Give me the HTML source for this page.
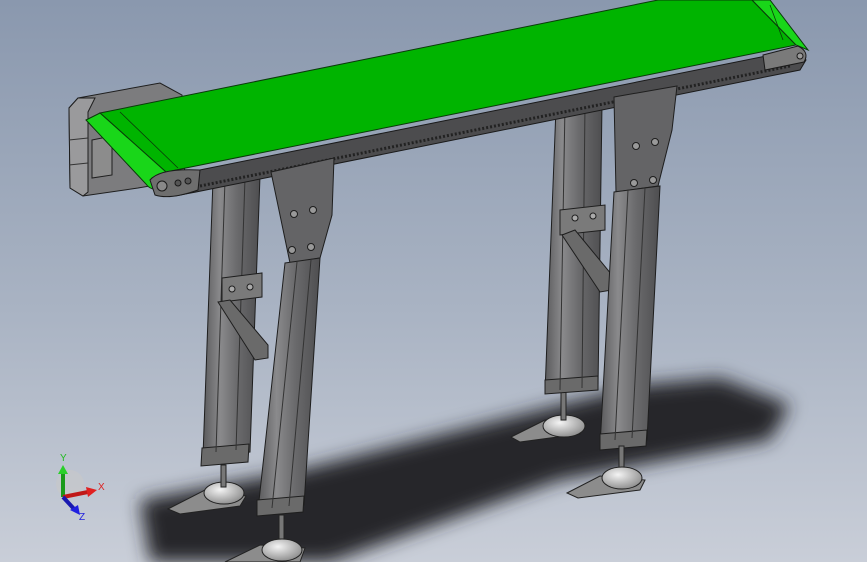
<!DOCTYPE html>
<html><head><meta charset="utf-8"><style>
html,body{margin:0;padding:0;width:867px;height:562px;overflow:hidden}
svg{display:block}
</style></head><body>
<svg width="867" height="562" viewBox="0 0 867 562" xmlns="http://www.w3.org/2000/svg" font-family="Liberation Sans, sans-serif">
<defs>
<linearGradient id="bg" x1="0" y1="0" x2="0" y2="1">
<stop offset="0" stop-color="#8a98ae"/><stop offset="0.55" stop-color="#a9b3c3"/><stop offset="1" stop-color="#c9ced8"/>
</linearGradient>
<filter id="bl" x="-20%" y="-40%" width="140%" height="180%"><feGaussianBlur stdDeviation="9"/></filter>
<linearGradient id="leg" x1="0" y1="0" x2="1" y2="0">
<stop offset="0" stop-color="#5a5a5c"/><stop offset="0.3" stop-color="#8a8a8c"/><stop offset="0.6" stop-color="#6a6a6c"/><stop offset="1" stop-color="#4e4e50"/>
</linearGradient>
<radialGradient id="dome" cx="0.4" cy="0.35" r="0.7"><stop offset="0" stop-color="#f4f4f4"/><stop offset="1" stop-color="#8a8a8a"/></radialGradient>
</defs>
<rect width="867" height="562" fill="url(#bg)"/>
<path d="M140,500 L300,470 L640,385 L720,378 L790,405 L770,440 L560,480 L330,562 L150,562 Z" fill="#26282c" filter="url(#bl)"/>
<g stroke="#222" stroke-width="1">
<path d="M168,509 L205,490 L246,496 L240,506 L180,514 Z" fill="#8c8c8c"/>
<ellipse cx="224" cy="493" rx="20" ry="11" fill="url(#dome)"/>
<rect x="221" y="465" width="5" height="22" fill="#777"/>
<path d="M511,437 L545,420 L586,424 L580,434 L520,442 Z" fill="#8c8c8c"/>
<ellipse cx="564" cy="426" rx="21" ry="11" fill="url(#dome)"/>
<rect x="561" y="392" width="5" height="28" fill="#777"/>
</g>
<g stroke="#1e1e1e" stroke-width="1">
<path d="M556,108 L602,104 L598,388 L545,392 Z" fill="url(#leg)"/>
<path d="M545,380 L598,376 L598,390 L545,394 Z" fill="#6a6a6a"/>
<path d="M565,106 L560,390 M585,105 L582,388" stroke="#333" fill="none"/>
<path d="M560,210 L605,205 L605,230 L560,235 Z" fill="#7a7a7a"/>
<path d="M562,235 L575,230 L612,275 L612,290 L600,292 Z" fill="#6a6a6a"/>
<circle cx="575" cy="218" r="3" fill="#aaa"/><circle cx="593" cy="216" r="3" fill="#aaa"/>
<path d="M213,180 L260,176 L250,452 L203,456 Z" fill="url(#leg)"/>
<path d="M202,448 L249,444 L248,462 L201,466 Z" fill="#6a6a6a"/>
<path d="M225,180 L216,452 M245,178 L236,450" stroke="#333" fill="none"/>
<path d="M222,278 L262,273 L262,297 L222,302 Z" fill="#7a7a7a"/>
<path d="M218,302 L230,300 L268,345 L268,358 L255,360 Z" fill="#6a6a6a"/>
<circle cx="232" cy="289" r="3" fill="#aaa"/><circle cx="250" cy="287" r="3" fill="#aaa"/>
</g>
<g stroke="#1e1e1e" stroke-width="1">
<path d="M78,98 L160,83 L182,95 L185,180 L138,188 L83,196 L70,188 L69,108 Z" fill="#7c7c7e"/>
<path d="M69,108 L78,98 L95,98 L88,112 L88,192 L83,196 L70,188 Z" fill="#9a9a9c"/>
<path d="M92,140 L112,136 L112,175 L92,178 Z" fill="#8c8c8c"/>
<path d="M69,140 L88,138 M69,165 L88,163" stroke="#333"/>
</g>
<path d="M160,178 L796,50 L806,60 L800,70 L196,192 L175,196 Z" fill="#4c4c4e" stroke="#1a1a1a"/>
<path d="M200,186 L790,66" stroke="#222" stroke-width="3" stroke-dasharray="2 2"/>
<path d="M100,113 L658,0 L752,0 L796,45 L166,172 Z" fill="#00b400" stroke="#0a3a0a" stroke-width="1"/>
<path d="M86,120 L100,113 L166,172 L160,190 Q150,190 146,184 Z" fill="#19d619" stroke="#0a3a0a"/>
<path d="M752,0 L796,45 L808,50 L770,0 Z" fill="#19d619" stroke="#0a3a0a"/>
<path d="M120,112 L178,168 M770,5 L783,40" stroke="#0a3a0a" stroke-width="0.8"/>
<g stroke="#1a1a1a">
<path d="M150,180 Q160,168 200,170 L198,190 Q170,200 155,195 Z" fill="#6e6e6e"/>
<circle cx="162" cy="186" r="5" fill="#888"/><circle cx="178" cy="183" r="3" fill="#555"/><circle cx="188" cy="181" r="3" fill="#555"/>
<path d="M763,55 L798,46 Q810,52 804,62 L765,70 Z" fill="#7a7a7a"/>
<circle cx="800" cy="56" r="3" fill="#999"/>
</g>
<g stroke="#1e1e1e" stroke-width="1">
<path d="M614,97 L677,86 L672,130 L658,186 L616,192 Z" fill="#646466"/>
<circle cx="636" cy="146" r="3.5" fill="#999"/><circle cx="655" cy="142" r="3.5" fill="#999"/>
<circle cx="634" cy="183" r="3.5" fill="#999"/><circle cx="653" cy="180" r="3.5" fill="#999"/>
<path d="M614,192 L660,186 L647,440 L600,446 Z" fill="url(#leg)"/>
<path d="M600,434 L647,430 L646,446 L600,450 Z" fill="#6a6a6a"/>
<path d="M628,190 L615,440 M645,188 L632,438" stroke="#333" fill="none"/>
<path d="M271,172 L334,158 L332,215 L320,258 L290,263 Z" fill="#646466"/>
<circle cx="294" cy="214" r="3.5" fill="#999"/><circle cx="313" cy="210" r="3.5" fill="#999"/>
<circle cx="292" cy="250" r="3.5" fill="#999"/><circle cx="311" cy="247" r="3.5" fill="#999"/>
<path d="M285,263 L320,258 L304,505 L258,510 Z" fill="url(#leg)"/>
<path d="M257,500 L304,496 L303,512 L257,516 Z" fill="#6a6a6a"/>
<path d="M297,262 L272,508 M311,260 L289,506" stroke="#333" fill="none"/>
</g>
<g stroke="#222" stroke-width="1">
<rect x="619" y="446" width="5" height="24" fill="#777"/>
<path d="M567,493 L600,476 L645,480 L640,490 L578,498 Z" fill="#8c8c8c"/>
<ellipse cx="622" cy="478" rx="20" ry="11" fill="url(#dome)"/>
<rect x="279" y="515" width="5" height="24" fill="#777"/>
<path d="M225,562 L260,545 L305,548 L300,562 Z" fill="#8c8c8c"/>
<ellipse cx="282" cy="550" rx="20" ry="11" fill="url(#dome)"/>
</g>
<g>
<circle cx="70" cy="484" r="14" fill="#c8c8c8" opacity="0.6"/>
<line x1="63" y1="497" x2="63" y2="472" stroke="#1a9a1a" stroke-width="4"/>
<path d="M58,474 L63,465 L68,474 Z" fill="#2ad02a"/>
<line x1="63" y1="497" x2="88" y2="492" stroke="#c01818" stroke-width="4"/>
<path d="M86,487 L97,490 L88,497 Z" fill="#e02020"/>
<line x1="63" y1="497" x2="75" y2="510" stroke="#1818b0" stroke-width="4"/>
<path d="M70,510 L80,515 L78,505 Z" fill="#2020e0"/>
<text x="60" y="461" font-size="10" fill="#22bb22">Y</text>
<text x="98" y="490" font-size="10" fill="#dd2222">X</text>
<text x="79" y="520" font-size="10" fill="#2222dd">Z</text>
</g>
</svg>
</body></html>
